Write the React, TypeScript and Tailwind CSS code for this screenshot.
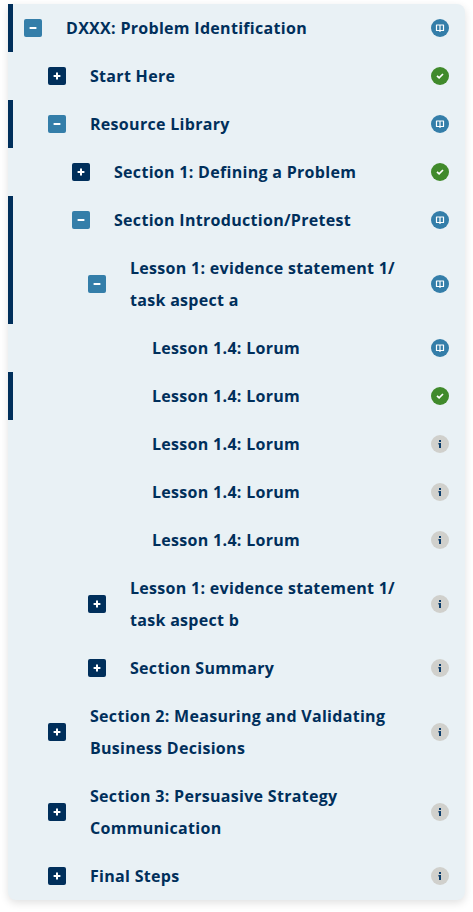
type Status = "reading" | "done" | "info";

type Item = {
  title: string[];
  indent: string;
  status: Status;
  toggle?: "open" | "closed";
  marked?: boolean;
};

const items: Item[] = [
  { title: ["DXXX: Problem Identification"], indent: "pl-4", toggle: "open", status: "reading", marked: true },
  { title: ["Start Here"], indent: "pl-10", toggle: "closed", status: "done" },
  { title: ["Resource Library"], indent: "pl-10", toggle: "open", status: "reading", marked: true },
  { title: ["Section 1: Defining a Problem"], indent: "pl-16", toggle: "closed", status: "done" },
  { title: ["Section Introduction/Pretest"], indent: "pl-16", toggle: "open", status: "reading", marked: true },
  { title: ["Lesson 1: evidence statement 1/", "task aspect a"], indent: "pl-20", toggle: "open", status: "reading", marked: true },
  { title: ["Lesson 1.4: Lorum"], indent: "pl-36", status: "reading" },
  { title: ["Lesson 1.4: Lorum"], indent: "pl-36", status: "done", marked: true },
  { title: ["Lesson 1.4: Lorum"], indent: "pl-36", status: "info" },
  { title: ["Lesson 1.4: Lorum"], indent: "pl-36", status: "info" },
  { title: ["Lesson 1.4: Lorum"], indent: "pl-36", status: "info" },
  { title: ["Lesson 1: evidence statement 1/", "task aspect b"], indent: "pl-20", toggle: "closed", status: "info" },
  { title: ["Section Summary"], indent: "pl-20", toggle: "closed", status: "info" },
  { title: ["Section 2: Measuring and Validating", "Business Decisions"], indent: "pl-10", toggle: "closed", status: "info" },
  { title: ["Section 3: Persuasive Strategy", "Communication"], indent: "pl-10", toggle: "closed", status: "info" },
  { title: ["Final Steps"], indent: "pl-10", toggle: "closed", status: "info" },
];

const Toggle = ({ open }: { open: boolean }) => (
  <button
    className={`mr-6 h-[18px] w-[18px] shrink-0 rounded-[2px] ${open ? "bg-[#347ea9]" : "bg-[#002f5b]"}`}
  >
    <svg viewBox="0 0 18 18" width="18" height="18" stroke="#fff" strokeWidth="2">
      <path d={open ? "M5.6 9H12.4" : "M5.6 9H12.4M9 5.6V12.4"} />
    </svg>
  </button>
);

const StatusIcon = ({ status }: { status: Status }) => {
  if (status === "reading") {
    return (
      <svg viewBox="0 0 18 18" width="18" height="18" className="shrink-0" fill="none">
        <circle cx="9" cy="9" r="9" fill="#347ea9" />
        <path d="M5.5 6H12.5V11.5H5.5ZM9 6V13" stroke="#fff" strokeWidth="1.2" strokeLinejoin="round" />
      </svg>
    );
  }
  if (status === "done") {
    return (
      <svg viewBox="0 0 18 18" width="18" height="18" className="shrink-0" fill="none">
        <circle cx="9" cy="9" r="9" fill="#408a2b" />
        <path d="M6 8.8L8.1 10.9L12 7" stroke="#fff" strokeWidth="1.7" />
      </svg>
    );
  }
  return (
    <svg viewBox="0 0 18 18" width="18" height="18" className="shrink-0">
      <circle cx="9" cy="9" r="9" fill="#d0d0cc" />
      <path d="M8 5H10V7H8ZM7.4 8H10V13H8V9.4H7.4Z" fill="#0b3d6b" />
    </svg>
  );
};

const Row = ({ item }: { item: Item }) => (
  <li
    className={`flex items-center py-2 pr-4 ${item.indent} ${
      item.marked ? "bg-[linear-gradient(#002f5b,#002f5b)] bg-[length:5px_100%] bg-no-repeat" : ""
    }`}
  >
    {item.toggle && <Toggle open={item.toggle === "open"} />}
    <div className="flex-1">
      {item.title.map((line) => (
        <p key={line} className="whitespace-nowrap">
          {line}
        </p>
      ))}
    </div>
    <StatusIcon status={item.status} />
  </li>
);

const App = () => {
  return (
    <div className="h-[912px] bg-white pl-2 pr-2 pt-1">
      <ul className="w-[457px] rounded-r-lg rounded-bl-lg bg-[#e9f1f5] font-['Open_Sans',sans-serif] text-base leading-8 font-bold tracking-[0.3px] text-[#002f5b] shadow-[0_3px_8px_rgba(0,0,0,0.12)]">
        {items.map((item, i) => (
          <Row key={i} item={item} />
        ))}
      </ul>
    </div>
  );
};

export default App;
